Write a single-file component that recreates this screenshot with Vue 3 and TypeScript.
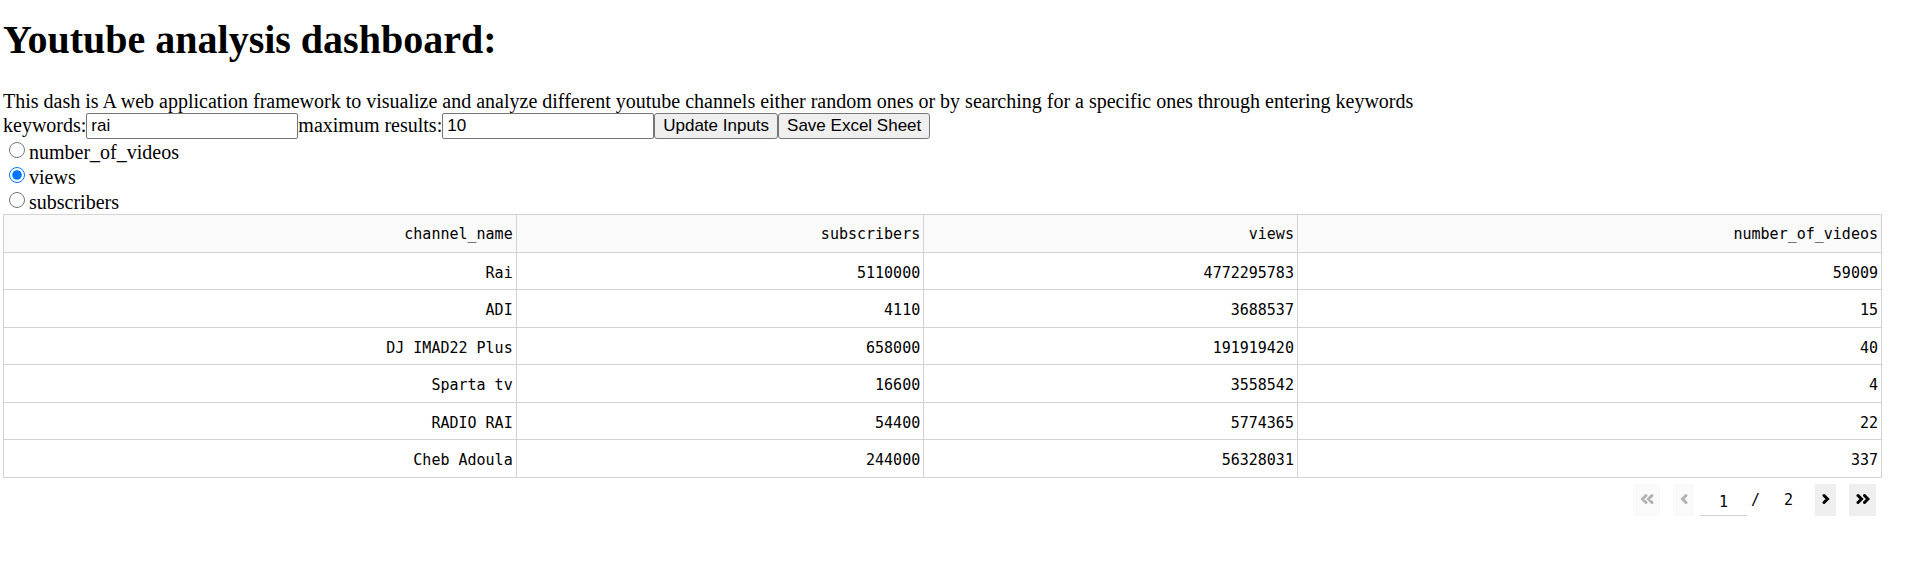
<script setup lang="ts">
import { ref } from 'vue'

interface Channel {
  name: string
  subscribers: number
  views: number
  videos: number
}

const keywords = ref('rai')
const maxResults = ref('10')
const metric = ref('views')
const page = ref('1')
const metrics: string[] = ['number_of_videos', 'views', 'subscribers']
const columns: string[] = ['channel_name', 'subscribers', 'views', 'number_of_videos']
const channels: Channel[] = [
  { name: 'Rai', subscribers: 5110000, views: 4772295783, videos: 59009 },
  { name: 'ADI', subscribers: 4110, views: 3688537, videos: 15 },
  { name: 'DJ IMAD22 Plus', subscribers: 658000, views: 191919420, videos: 40 },
  { name: 'Sparta tv', subscribers: 16600, views: 3558542, videos: 4 },
  { name: 'RADIO RAI', subscribers: 54400, views: 5774365, videos: 22 },
  { name: 'Cheb Adoula', subscribers: 244000, views: 56328031, videos: 337 },
]
</script>

<template>
  <main class="dashboard">
    <h1>Youtube analysis dashboard:</h1>
    <p class="intro">This dash is A web application framework to visualize and analyze different youtube channels either random ones or by searching for a specific ones through entering keywords</p>
    <form class="controls" @submit.prevent>
      <label for="keywords">keywords:</label>
      <input id="keywords" v-model="keywords" type="text">
      <label for="max-results">maximum results:</label>
      <input id="max-results" v-model="maxResults" type="text">
      <button type="button">Update Inputs</button>
      <button type="button">Save Excel Sheet</button>
    </form>
    <div class="metrics" role="radiogroup" aria-label="Metric">
      <label v-for="m in metrics" :key="m">
        <input v-model="metric" type="radio" name="metric" :value="m">
        <span>{{ m }}</span>
      </label>
    </div>
    <table>
      <colgroup>
        <col class="c-name"><col class="c-subs"><col class="c-views"><col>
      </colgroup>
      <thead>
        <tr><th v-for="c in columns" :key="c" scope="col">{{ c }}</th></tr>
      </thead>
      <tbody>
        <tr v-for="c in channels" :key="c.name">
          <td>{{ c.name }}</td>
          <td>{{ c.subscribers }}</td>
          <td>{{ c.views }}</td>
          <td>{{ c.videos }}</td>
        </tr>
      </tbody>
    </table>
    <nav class="pager" aria-label="Pages">
      <button class="wide" type="button" disabled aria-label="First page">
        <svg width="14" height="12" viewBox="0 0 14 12"><path d="M6 2.500 2.500 6 6 9.500M12 2.500 8.500 6 12 9.500" /></svg>
      </button>
      <button type="button" disabled aria-label="Previous page">
        <svg width="8" height="12" viewBox="0 0 8 12"><path d="M6 2.500 2.500 6 6 9.500" /></svg>
      </button>
      <div class="pages">
        <input v-model="page" type="text" aria-label="Current page">
        <span class="slash">/</span>
        <span class="total">2</span>
      </div>
      <button type="button" aria-label="Next page">
        <svg width="8" height="12" viewBox="0 0 8 12"><path d="M2 2.500 5.500 6 2 9.500" /></svg>
      </button>
      <button class="wide" type="button" aria-label="Last page">
        <svg width="14" height="12" viewBox="0 0 14 12"><path d="M2 2.500 5.500 6 2 9.500M8.500 2.500 12 6 8.500 9.500" /></svg>
      </button>
    </nav>
  </main>
</template>

<style>
body {
  background: #fff;
}
</style>

<style scoped>
.dashboard {
  padding: 17px 46px 0 3px;
  color: #000;
  font: 20px/23px "Liberation Serif", "Times New Roman", serif;
}
h1 {
  margin: 0 0 27px;
  font-size: 40px;
  line-height: 46px;
  font-weight: 700;
}
.intro {
  margin: 0;
}
.controls {
  display: flex;
  align-items: center;
  height: 26px;
}
.controls label {
  padding-bottom: 1px;
}
.controls input,
.controls button {
  box-sizing: border-box;
  height: 26px;
  margin: 0;
  border: 1px solid #767676;
  border-radius: 2px;
  color: #000;
  font: 17px/20px "Liberation Sans", Arial, sans-serif;
}
.controls input {
  width: 212px;
  padding: 0 4px;
  background: #fff;
}
.controls button {
  padding: 0 8px;
  border-radius: 3px;
  background: #efefef;
}
.metrics {
  display: flex;
  flex-direction: column;
  align-items: flex-start;
}
.metrics label {
  display: flex;
  align-items: flex-end;
  gap: 4px;
  height: 25px;
}
.metrics input {
  width: 16px;
  height: 16px;
  margin: 0 0 6px 6px;
  accent-color: #0075ff;
}
table {
  width: 100%;
  border-collapse: collapse;
  table-layout: fixed;
  font: 15px/20px "DejaVu Sans Mono", Consolas, monospace;
}
.c-name {
  width: 27.3%;
}
.c-subs {
  width: 21.7%;
}
.c-views {
  width: 19.9%;
}
th,
td {
  box-sizing: border-box;
  height: 37px;
  padding: 3px 3px 0;
  border: 1px solid #d3d3d3;
  font-weight: 400;
  text-align: right;
}
th,
tbody tr:nth-child(even) td {
  height: 38px;
}
th {
  padding-top: 1px;
  background: #fafafa;
}
.pager {
  display: flex;
  justify-content: flex-end;
  gap: 13px;
  padding: 6px 6px 0 0;
  font: 15px/20px "DejaVu Sans Mono", Consolas, monospace;
}
.pager button {
  display: flex;
  align-items: center;
  justify-content: center;
  width: 21px;
  height: 32px;
  margin: 0;
  padding: 0 0 2px;
  border: 0;
  background: #efefef;
  color: #000;
}
.pager button.wide {
  width: 27px;
}
.pager button:disabled {
  background: #fafafa;
  color: #b3b3b3;
}
.pager path {
  fill: none;
  stroke: currentColor;
  stroke-width: 3;
  stroke-linecap: round;
}
.pages {
  display: flex;
  align-items: center;
  width: 102px;
  margin: 0 0 0 -7px;
}
.pages input {
  box-sizing: border-box;
  width: 47px;
  height: 31px;
  padding: 4px 0 0;
  border: 0;
  border-bottom: 1px solid #d3d3d3;
  background: none;
  font: inherit;
  text-align: center;
}
.slash {
  margin-left: 4px;
}
.total {
  margin-left: 24px;
}
</style>
